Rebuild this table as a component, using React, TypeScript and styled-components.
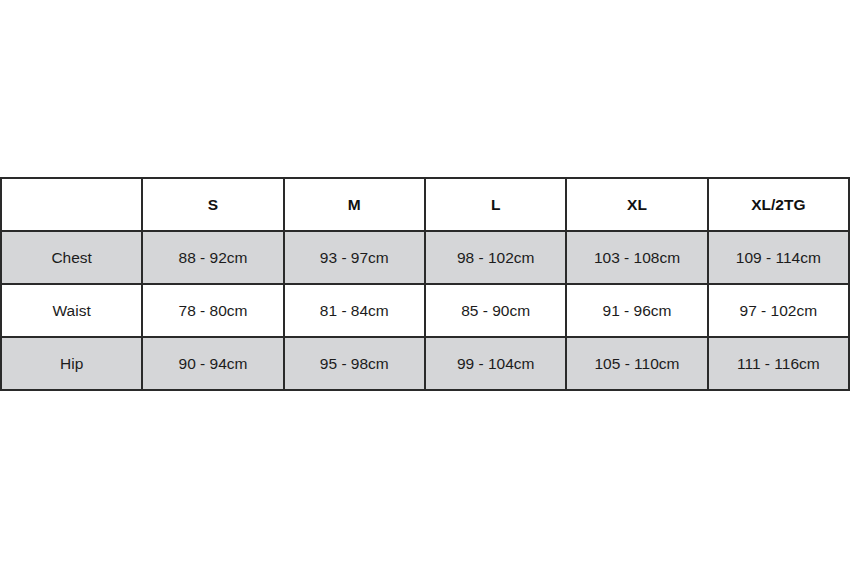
import React from 'react'
import styled, { createGlobalStyle } from 'styled-components'

const GlobalStyle = createGlobalStyle`
  html, body {
    margin: 0;
    padding: 0;
    background: #ffffff;
  }
  body {
    font-family: "Liberation Sans", Arial, sans-serif;
    color: #1c1c1c;
  }
`

const SIZES = ['S', 'M', 'L', 'XL', 'XL/2TG']

const ROWS = [
  { label: 'Chest', values: ['88 - 92cm', '93 - 97cm', '98 - 102cm', '103 - 108cm', '109 - 114cm'] },
  { label: 'Waist', values: ['78 - 80cm', '81 - 84cm', '85 - 90cm', '91 - 96cm', '97 - 102cm'] },
  { label: 'Hip', values: ['90 - 94cm', '95 - 98cm', '99 - 104cm', '105 - 110cm', '111 - 116cm'] },
]

export default function App() {
  return (
    <Page>
      <GlobalStyle />
      <SizeTable>
        <thead>
          <tr>
            <HeadCell />
            {SIZES.map(size => (
              <HeadCell key={size}>{size}</HeadCell>
            ))}
          </tr>
        </thead>
        <tbody>
          {ROWS.map((row, i) => (
            <Row key={row.label} shaded={i % 2 === 0}>
              <Cell>{row.label}</Cell>
              {row.values.map(value => (
                <Cell key={value}>{value}</Cell>
              ))}
            </Row>
          ))}
        </tbody>
      </SizeTable>
    </Page>
  )
}

//#region Styled components
const Page = styled.div`
  height: 567px;
  width: 850px;
  display: flex;
  flex-direction: column;
  justify-content: center;
`

const SizeTable = styled.table`
  width: 850px;
  margin-top: 1px;
  border-collapse: collapse;
  table-layout: fixed;
  border: 2px solid #2a2a2a;
`

const HeadCell = styled.th`
  height: 51px;
  padding: 0;
  border: 2px solid #2a2a2a;
  font-size: 15.5px;
  font-weight: 700;
  text-align: center;
  background: #ffffff;
  color: #111111;
`

const Row = styled.tr<{ shaded: boolean }>`
  background-color: ${props => (props.shaded ? '#d5d6d8' : '#ffffff')};
`

const Cell = styled.td`
  height: 51px;
  padding: 0;
  border: 2px solid #2a2a2a;
  font-size: 15.5px;
  text-align: center;
`
//#endregion
